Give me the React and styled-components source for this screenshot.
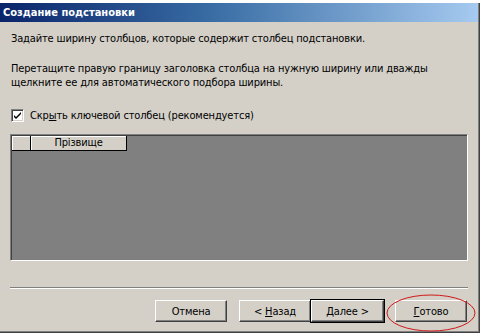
import React from "react";
import styled, { createGlobalStyle } from "styled-components";

const FONT = `"DejaVu Sans Condensed", "DejaVu Sans", "Liberation Sans", sans-serif`;

const Global = createGlobalStyle`
  html, body { margin: 0; padding: 0; background: #ffffff; }
  body { font-family: ${FONT}; font-size: 11px; letter-spacing: -0.15px; }
`;

const Window = styled.div`
  margin-top: 3px;
  width: 480px;
  height: 330px;
  box-sizing: border-box;
  background: #d4d0c8;
  border-right: 1px solid #404040;
  border-bottom: 1px solid #404040;
  box-shadow: inset -1px -1px 0 #808080;
  display: flex;
  flex-direction: column;
  position: relative;
  color: #000;
`;

const TitleBar = styled.div`
  height: 19px;
  margin-right: 1px;
  background: linear-gradient(to right, #0a246a 0%, #3a6ea5 45%, #a6caf0 100%);
  color: #fff;
  font-weight: bold;
  font-size: 11px;
  letter-spacing: 0;
  line-height: 19px;
  padding-left: 3px;
`;

const Body = styled.div`
  flex: 1;
  display: flex;
  flex-direction: column;
  padding: 0 10px 0 10px;
`;

const Text = styled.p`
  margin: ${(p) => p.$mt}px 0 0 1px;
  line-height: 14px;
`;

const CheckRow = styled.label`
  display: flex;
  align-items: center;
  gap: 6px;
  margin: 19px 0 0 1px;
  height: 13px;
`;

const Box = styled.span`
  width: 13px;
  height: 13px;
  box-sizing: border-box;
  background: #fff;
  border: 1px solid;
  border-color: #808080 #fff #fff #808080;
  box-shadow: inset 1px 1px 0 #404040, inset -1px -1px 0 #d4d0c8;
  display: flex;
  align-items: center;
  justify-content: center;
`;

const Grid = styled.div`
  margin-top: 12px;
  height: 127px;
  margin-right: 1px;
  box-sizing: border-box;
  background: #808080;
  border: 1px solid;
  border-color: #808080 #fff #fff #808080;
  box-shadow: inset 1px 1px 0 #404040;
  padding: 1px 0 0 1px;
`;

const HeaderRow = styled.div`
  display: flex;
  height: 15px;
`;

const HeaderCell = styled.div`
  width: ${(p) => p.$w}px;
  height: 15px;
  box-sizing: border-box;
  background: #d4d0c8;
  border-right: 1px solid #000;
  border-bottom: 1px solid #000;
  box-shadow: inset 1px 1px 0 #fff;
  text-align: center;
  line-height: 14px;
  font-size: 11px;
`;

const Separator = styled.div`
  margin-top: 26px;
  height: 0;
  border-top: 1px solid #808080;
  border-bottom: 1px solid #fff;
  margin-right: 1px;
`;

const Buttons = styled.div`
  display: flex;
  margin-top: 11px;
  padding-left: 145px;
`;

const Button = styled.button`
  width: ${(p) => (p.$default ? 73 : 72)}px;
  height: 22px;
  margin-left: ${(p) => p.$ml || 0}px;
  box-sizing: border-box;
  font-family: ${FONT};
  font-size: 11px;
  letter-spacing: -0.15px;
  color: #000;
  background: #d4d0c8;
  padding: 0;
  border: 1px solid;
  border-color: #fff #404040 #404040 #fff;
  box-shadow: inset -1px -1px 0 #808080;
  outline: ${(p) => (p.$default ? "1px solid #000" : "none")};
  outline-offset: 0;
  u { text-decoration: underline; }
`;

const Ellipse = styled.svg`
  position: absolute;
  left: 385px;
  top: 287px;
  pointer-events: none;
`;

export default function App() {
  return (
    <>
      <Global />
      <Window>
        <TitleBar>Создание подстановки</TitleBar>
        <Body>
          <Text $mt={10}>Задайте ширину столбцов, которые содержит столбец подстановки.</Text>
          <Text $mt={16}>
            Перетащите правую границу заголовка столбца на нужную ширину или дважды
            <br />
            щелкните ее для автоматического подбора ширины.
          </Text>
          <CheckRow>
            <Box>
              <svg width="9" height="9" viewBox="0 0 9 9">
                <path d="M1 4 L3 6 L8 1 L8 3 L3 8 L1 6 Z" fill="#000" />
              </svg>
            </Box>
            <span>
              Скр<u>ы</u>ть ключевой столбец (рекомендуется)
            </span>
          </CheckRow>
          <Grid>
            <HeaderRow>
              <HeaderCell $w={19} />
              <HeaderCell $w={96}>Прізвище</HeaderCell>
            </HeaderRow>
          </Grid>
          <Separator />
          <Buttons>
            <Button>Отмена</Button>
            <Button $ml={12}>
              &lt; <u>Н</u>азад
            </Button>
            <Button $default>
              <u>Д</u>алее &gt;
            </Button>
            <Button $ml={11}>
              <u>Г</u>отово
            </Button>
          </Buttons>
        </Body>
        <Ellipse width="94" height="44" viewBox="0 0 94 44">
          <ellipse cx="46" cy="23" rx="44" ry="18" fill="none" stroke="#d01818" strokeWidth="1" />
        </Ellipse>
      </Window>
    </>
  );
}
